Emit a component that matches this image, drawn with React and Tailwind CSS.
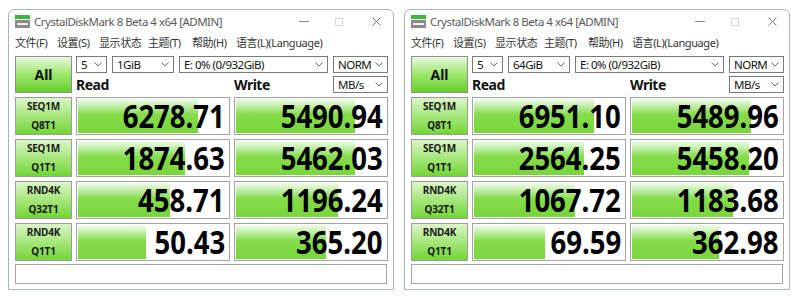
import React from 'react'

const windows = [
  {
    size: '1GiB',
    rows: [
      { a: 'SEQ1M', b: 'Q8T1', read: '6278.71', rf: 80, write: '5490.94', wf: 79 },
      { a: 'SEQ1M', b: 'Q1T1', read: '1874.63', rf: 71, write: '5462.03', wf: 79 },
      { a: 'RND4K', b: 'Q32T1', read: '458.71', rf: 61, write: '1196.24', wf: 68 },
      { a: 'RND4K', b: 'Q1T1', read: '50.43', rf: 45, write: '365.20', wf: 60 },
    ],
  },
  {
    size: '64GiB',
    rows: [
      { a: 'SEQ1M', b: 'Q8T1', read: '6951.10', rf: 80, write: '5489.96', wf: 79 },
      { a: 'SEQ1M', b: 'Q1T1', read: '2564.25', rf: 73, write: '5458.20', wf: 78 },
      { a: 'RND4K', b: 'Q32T1', read: '1067.72', rf: 67, write: '1183.68', wf: 67 },
      { a: 'RND4K', b: 'Q1T1', read: '69.59', rf: 47, write: '362.98', wf: 58 },
    ],
  },
]

const menu = [
  { t: '文件(F)', w: 'w-[42px]' },
  { t: '设置(S)', w: 'w-[42px]' },
  { t: '显示状态', w: 'w-[49px]' },
  { t: '主题(T)', w: 'w-[44px]' },
  { t: '帮助(H)', w: 'w-[44px]' },
  { t: '语言(L)(Language)', w: 'w-[90px]' },
]

const ui = "font-['Noto_Sans','Noto_Sans_CJK_SC',sans-serif]"

const Chevron = () => (
  <svg width="8" height="5" viewBox="0 0 8 5" className="shrink-0">
    <path d="M0.5 0.5 L4 4 L7.5 0.5" fill="none" stroke="#6b6b6b" strokeWidth="1" />
  </svg>
)

const Select = ({ label, w }) => (
  <div className={`flex h-[17px] ${w} items-center justify-between border border-[#7a7a7a] bg-white pl-[4px] pr-[4px] text-[11.5px] leading-none tracking-[-0.5px] text-[#111]`}>
    <span>{label}</span>
    <Chevron />
  </div>
)

const Label = ({ a, b }) => (
  <div className="flex h-[38px] flex-col items-center justify-center border border-[#9c9c9c] bg-gradient-to-b from-[#dcf5c8] via-[#a5e77a] to-[#72d532] text-[10px] font-bold leading-[19px] tracking-[-0.2px] text-[#1a1a1a]">
    <span>{a}</span>
    <span>{b}</span>
  </div>
)

const Cell = ({ value, fill }) => (
  <div className="h-[38px] border border-[#a3a3a3] bg-white p-px">
    <div className="relative h-full">
      <div
        className="absolute inset-y-0 left-0 bg-gradient-to-b from-[#f2fbec] via-[#86dc4a] via-45% to-[#78d63a]"
        style={{ width: `${fill}%` }}
      />
      <div className="relative flex h-full items-center justify-end pr-[3px]">
        <span className="origin-right scale-x-[0.86] text-[32px] font-bold leading-[34px] text-black">{value}</span>
      </div>
    </div>
  </div>
)

const AppIcon = () => (
  <svg width="15" height="13" viewBox="0 0 15 13">
    <rect x="0" y="0" width="15" height="4" fill="#3cb83c" />
    <rect x="0" y="5" width="15" height="8" fill="#8a8a8a" />
    <rect x="2" y="8" width="11" height="2" fill="#f0f0f0" />
  </svg>
)

const Window = ({ data }) => (
  <div className={`flex h-[281px] w-[386px] flex-col rounded-t-[6px] border border-[#a7b2c2] bg-white ${ui}`}>
    <div className="flex h-[23px] items-center pl-[6px] pr-[12px]">
      <AppIcon />
      <span className="ml-[4px] text-[11.5px] tracking-[-0.5px] text-[#5a5a5a]">CrystalDiskMark 8 Beta 4 x64 [ADMIN]</span>
      <div className="ml-auto flex items-center">
        <div className="h-px w-[10px] bg-[#8a8a8a]" />
        <div className="ml-[26px] h-[8px] w-[8px] border border-[#d6d6d6]" />
        <svg width="9" height="9" viewBox="0 0 9 9" className="ml-[29px]">
          <path d="M0.5 0.5 L8.5 8.5 M8.5 0.5 L0.5 8.5" stroke="#777" strokeWidth="1" />
        </svg>
      </div>
    </div>
    <div className="flex h-[20px] items-center pl-[6px] text-[11px] tracking-[-0.4px] text-[#333]">
      {menu.map((m) => (
        <span key={m.t} className={`${m.w} whitespace-nowrap`}>{m.t}</span>
      ))}
    </div>
    <div className="flex flex-col px-[6px] pt-[3px]">
      <div className="grid grid-cols-[57px_154px_154px] gap-x-[4px]">
        <div className="flex h-[37px] items-center justify-center border border-[#8f8f8f] bg-gradient-to-b from-[#e8f8da] via-[#9ce66a] to-[#66d127] text-[14px] font-bold text-[#111]">
          All
        </div>
        <div className="col-span-2 flex flex-col gap-[3px]">
          <div className="flex gap-[5px]">
            <Select label="5" w="w-[31px]" />
            <Select label={data.size} w="w-[62px]" />
            <Select label="E: 0% (0/932GiB)" w="w-[149px]" />
            <Select label="NORM" w="w-[55px]" />
          </div>
          <div className="flex items-center">
            <span className="w-[158px] text-[14px] font-bold leading-none tracking-[-0.5px] text-[#111]">Read</span>
            <span className="text-[14px] font-bold leading-none tracking-[-0.5px] text-[#111]">Write</span>
            <div className="ml-auto">
              <Select label="MB/s" w="w-[55px]" />
            </div>
          </div>
        </div>
      </div>
      <div className="mt-[4px] grid grid-cols-[57px_154px_154px] gap-x-[4px] gap-y-[4px]">
        {data.rows.map((r, i) => (
          <React.Fragment key={i}>
            <Label a={r.a} b={r.b} />
            <Cell value={r.read} fill={r.rf} />
            <Cell value={r.write} fill={r.wf} />
          </React.Fragment>
        ))}
      </div>
      <div className="mt-[3px] h-[20px] border border-[#a3a3a3] bg-white" />
    </div>
  </div>
)

const App = () => (
  <div className="flex h-[299px] w-[800px] gap-[10px] bg-white pl-[8px] pt-[9px]">
    {windows.map((w, i) => (
      <Window key={i} data={w} />
    ))}
  </div>
)

export default App
